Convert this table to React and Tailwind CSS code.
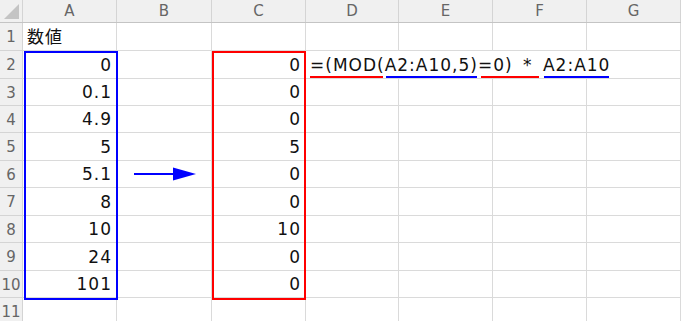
const font = { fontFamily: '"DejaVu Sans", "Noto Sans CJK JP", sans-serif' };

const cols = [
  { key: 'A', w: 'w-[94px]' },
  { key: 'B', w: 'w-[95px]' },
  { key: 'C', w: 'w-[94px]' },
  { key: 'D', w: 'w-[93px]' },
  { key: 'E', w: 'w-[94px]' },
  { key: 'F', w: 'w-[94px]' },
  { key: 'G', w: 'w-[94px]' },
];

const rows = [
  { n: 1, h: 'h-[28px]', a: '数値', c: '', left: true },
  { n: 2, h: 'h-[28px]', a: '0', c: '0', formula: true },
  { n: 3, h: 'h-[27px]', a: '0.1', c: '0' },
  { n: 4, h: 'h-[27px]', a: '4.9', c: '0' },
  { n: 5, h: 'h-[28px]', a: '5', c: '5' },
  { n: 6, h: 'h-[27px]', a: '5.1', c: '0' },
  { n: 7, h: 'h-[28px]', a: '8', c: '0' },
  { n: 8, h: 'h-[27px]', a: '10', c: '10' },
  { n: 9, h: 'h-[28px]', a: '24', c: '0' },
  { n: 10, h: 'h-[27px]', a: '101', c: '0' },
  { n: 11, h: 'h-[27px]', a: '', c: '' },
];

// underline bar under part of the formula, drawn below the text
function Mark({ color, bar = 'left-[1px] right-[1px]', children }) {
  return (
    <span className="relative">
      {children}
      <span className={`absolute ${bar} -bottom-[3px] h-[2px] ${color}`} />
    </span>
  );
}

function Formula() {
  return (
    <span className="whitespace-nowrap [word-spacing:4px]">
      <Mark color="bg-[#ff0000]" bar="left-0 right-[2px]">=(MOD(</Mark>
      <Mark color="bg-[#0000ff]" bar="left-[1px] right-[1px]">A2:A10,5)</Mark>
      <Mark color="bg-[#ff0000]" bar="left-[3px] -right-[6px]">=0) *</Mark>
      {' '}
      <Mark color="bg-[#0000ff]" bar="left-[1px] right-[1px]">A2:A10</Mark>
    </span>
  );
}

function Row({ row }) {
  return (
    <div className={`flex ${row.h}`}>
      <div className="w-[23px] shrink-0 flex items-center justify-center bg-[#f0f0f0] border-r border-b border-[#d4d4d4] text-[15px] text-[#666] pt-[2px]">
        {row.n}
      </div>
      {cols.map((col) => {
        const open = row.formula && (col.key === 'D' || col.key === 'E' || col.key === 'F');
        const startsText = row.left || (row.formula && col.key === 'D');
        let content = null;
        if (col.key === 'A' && row.a) content = row.a;
        if (col.key === 'C' && row.c) content = row.c;
        if (row.formula && col.key === 'D') content = <Formula />;
        return (
          <div
            key={col.key}
            className={`${col.w} shrink-0 flex items-center pt-[2px] border-b border-[#dadada] ${open ? '' : 'border-r'} ${
              startsText ? 'justify-start pl-[4px]' : 'justify-end pr-[4px]'
            } text-[17px] text-[#111] tracking-[1px]`}
          >
            {content}
          </div>
        );
      })}
    </div>
  );
}

export default function App() {
  return (
    <div className="relative w-[681px] h-[321px] overflow-hidden bg-white" style={font}>
      {/* column headers */}
      <div className="flex h-[23px] bg-[#f0f0f0] border-b border-[#c4c4c4]">
        <div className="w-[23px] shrink-0 border-r border-[#d4d4d4] flex items-end justify-end p-[3px]">
          <svg width="15" height="15" viewBox="0 0 15 15">
            <polygon points="15,0 15,15 0,15" fill="#c4c4c4" />
          </svg>
        </div>
        {cols.map((col) => (
          <div
            key={col.key}
            className={`${col.w} shrink-0 flex items-center justify-center border-r border-[#d4d4d4] text-[15px] text-[#666]`}
          >
            {col.key}
          </div>
        ))}
      </div>

      {rows.map((row) => (
        <Row key={row.n} row={row} />
      ))}

      {/* range outlines */}
      <div className="absolute left-[24px] top-[51px] w-[94px] h-[249px] border-2 border-[#0000ff] pointer-events-none" />
      <div className="absolute left-[212px] top-[51px] w-[94px] h-[249px] border-2 border-[#ff0000] pointer-events-none" />

      {/* arrow */}
      <svg className="absolute left-[133px] top-[166px]" width="64" height="16" viewBox="0 0 64 16">
        <line x1="1" y1="8" x2="42" y2="8" stroke="#0000ff" strokeWidth="2" />
        <polygon points="40,1.5 63,8 40,14.5" fill="#0000ff" />
      </svg>
    </div>
  );
}
